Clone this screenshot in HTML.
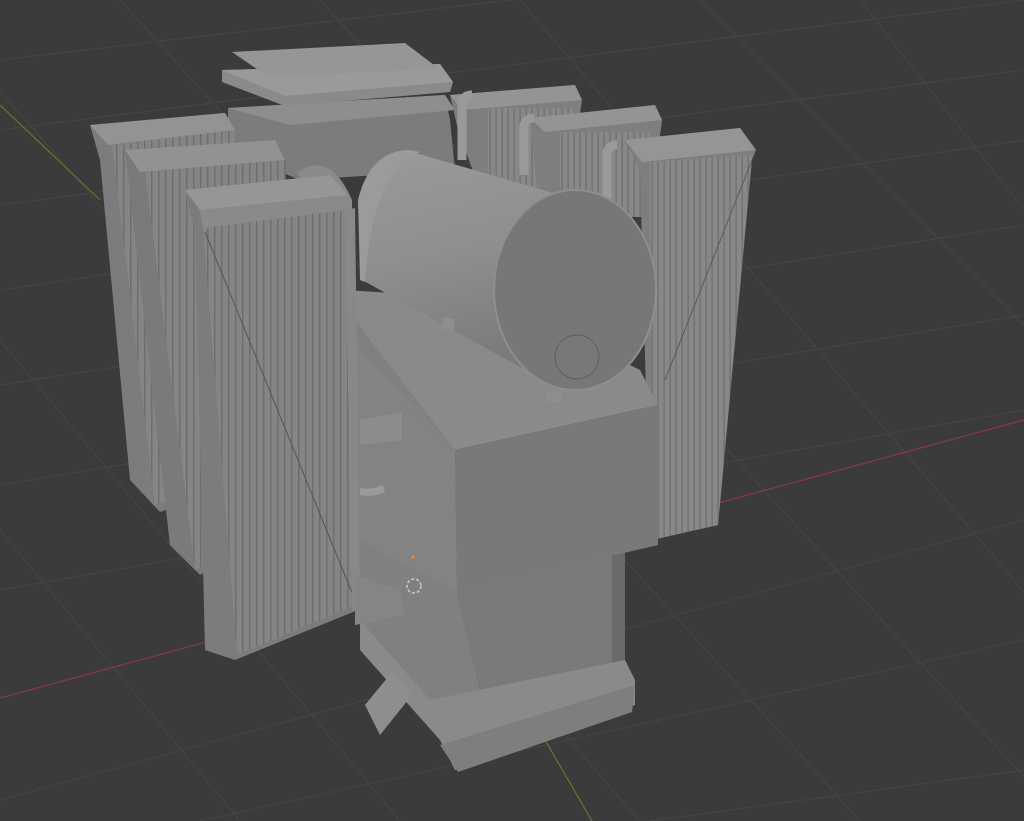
<!DOCTYPE html>
<html><head><meta charset="utf-8"><style>
html,body{margin:0;padding:0;background:#3b3b3b;overflow:hidden;width:1024px;height:821px}
svg{display:block;overflow:hidden}
</style></head><body>
<svg width="1024" height="821" viewBox="0 0 1024 821" xmlns="http://www.w3.org/2000/svg">
<defs>
<clipPath id="c"><rect width="1024" height="821"/></clipPath>
<pattern id="fins" width="7" height="10" patternUnits="userSpaceOnUse">
<rect width="7" height="10" fill="#858585"/><rect x="4" width="1.5" height="10" fill="#6e6e6e"/>
</pattern>
<pattern id="fins2" width="6" height="10" patternUnits="userSpaceOnUse">
<rect width="6" height="10" fill="#888"/><rect x="3.5" width="1.3" height="10" fill="#707070"/>
</pattern>
<linearGradient id="cyl" x1="0" y1="0" x2="0.25" y2="1">
<stop offset="0" stop-color="#9a9a9a"/><stop offset="0.5" stop-color="#8f8f8f"/><stop offset="1" stop-color="#7a7a7a"/>
</linearGradient>
</defs>
<g clip-path="url(#c)">
<rect width="1024" height="821" fill="#3b3b3b"/>
<g stroke="#464646" stroke-width="1" fill="none">
<path d="M0 60 L1024 -60 M0 130 L1024 0 M0 205 L1024 70 M0 290 L1024 140 M0 385 L1024 225 M0 485 L1024 315 M0 590 L1024 410 M0 800 L1024 520 M200 821 L1024 640 M650 821 L1024 770"/>
<path d="M-200 100 L400 821 M-80 0 L640 821 M120 0 L860 821 M320 0 L1024 777 M520 0 L1024 592 M700 0 L1024 325 M860 0 L1024 210 M0 530 L240 821"/>
</g>
<path d="M0 698 L1024 420" stroke="#8a3a3f" stroke-width="1.2"/>
<path d="M0 105 L100 200 M545 740 L592 821" stroke="#5d7a2e" stroke-width="1.2"/>

<polygon points="228,108 445,95 450,120 455,170 300,180 228,150" fill="#7c7c7c"/>
<polygon points="228,108 445,95 455,110 290,125" fill="#8e8e8e"/>
<polygon points="222,70 440,64 453,82 450,92 285,106 222,82" fill="#8a8a8a"/>
<polygon points="222,70 440,64 453,82 285,96" fill="#9a9a9a"/>
<polygon points="232,52 405,43 438,68 270,78" fill="#969696"/>

<polygon points="90,125 225,113 235,130 250,480 160,512 130,480 100,160" fill="#7c7c7c"/>
<polygon points="90,125 225,113 235,130 108,145" fill="#939393"/>
<polygon points="112,145 235,130 248,470 155,505" fill="url(#fins)"/>
<polygon points="125,150 275,140 285,160 300,520 200,575 170,545" fill="#7a7a7a"/>
<polygon points="125,150 275,140 285,160 140,172" fill="#929292"/>
<polygon points="145,172 285,160 298,520 195,570" fill="url(#fins)"/>

<polygon points="450,95 575,85 582,100 570,180 480,190 458,130" fill="#7e7e7e"/>
<polygon points="450,95 575,85 582,100 462,110" fill="#949494"/>
<rect x="488" y="108" width="85" height="80" fill="url(#fins2)"/>
<polygon points="530,118 655,105 662,120 650,215 540,220" fill="#7e7e7e"/>
<polygon points="530,118 655,105 662,120 545,132" fill="#949494"/>
<rect x="560" y="132" width="90" height="85" fill="url(#fins2)"/>
<path d="M462 160 L462 105 Q462 95 472 95" stroke="#9a9a9a" stroke-width="9" fill="none"/>
<path d="M524 175 L524 128 Q524 118 534 118" stroke="#9a9a9a" stroke-width="9" fill="none"/>
<path d="M607 215 L607 155 Q607 145 617 145" stroke="#9a9a9a" stroke-width="9" fill="none"/>

<polygon points="625,140 740,128 756,150 752,160 718,525 650,540 640,170" fill="#7e7e7e"/>
<polygon points="625,140 740,128 756,150 642,162" fill="#959595"/>
<polygon points="650,162 752,155 718,525 652,540" fill="url(#fins2)"/>
<path d="M752 160 L665 380" stroke="#5a5a5a" stroke-width="1"/>

<polygon points="345,290 500,300 640,370 658,405 455,450 355,330" fill="#8a8a8a"/>
<polygon points="355,320 455,450 457,592 490,730 455,760 360,630" fill="#808080"/>
<polygon points="457,592 615,545 615,690 490,730" fill="#7a7a7a"/>
<polygon points="612,548 625,545 625,680 612,690" fill="#6a6a6a"/>
<polygon points="360,620 430,700 625,660 635,680 635,705 455,770 440,740 360,650" fill="#8a8a8a"/>
<polygon points="440,745 635,685 632,712 458,772" fill="#7e7e7e"/>
<polygon points="365,705 392,672 412,695 380,735" fill="#8e8e8e"/>
<polygon points="455,450 658,405 658,545 457,592" fill="#797979"/>
<polygon points="355,345 455,450 457,592 360,540" fill="#838383"/>
<polygon points="360,420 402,412 402,440 360,445" fill="#8c8c8c"/>
<path d="M360 488 Q372 490 383 485 L385 492 Q370 498 360 495Z" fill="#9a9a9a"/>

<path d="M298 172 Q330 150 352 200 L352 320 L340 310 Z" fill="#8a8a8a"/>
<polygon points="405,150 612,210 540,378 362,280 358,200" fill="url(#cyl)"/>
<path d="M358 200 Q370 150 410 150 L420 152 Q372 170 365 282 L360 280Z" fill="#9b9b9b"/>
<ellipse cx="575" cy="290" rx="81" ry="100" fill="#777" stroke="#8e8e8e" stroke-width="2"/>
<circle cx="577" cy="357" r="22" fill="#787878" stroke="#5e5e5e" stroke-width="1"/>
<rect x="442" y="318" width="12" height="12" fill="#8e8e8e"/>
<rect x="547" y="392" width="14" height="10" fill="#8e8e8e"/>

<polygon points="185,190 330,175 348,195 352,220 358,610 235,660 205,650 195,230" fill="#7c7c7c"/>
<polygon points="185,190 330,175 348,195 200,210" fill="#969696"/>
<polygon points="200,210 348,195 350,210 203,228" fill="#8a8a8a"/>
<polygon points="203,228 345,210 355,605 237,655" fill="url(#fins)"/>
<path d="M205 232 L355 600" stroke="#555" stroke-width="1"/>
<polygon points="345,210 355,208 360,605 352,612" fill="#888"/>
<polygon points="355,575 400,590 405,615 355,625" fill="#858585"/>
<circle cx="414" cy="586" r="7" fill="none" stroke="#d9c9c9" stroke-width="1.5" stroke-dasharray="3 2"/>
<circle cx="413" cy="557" r="1.8" fill="#e08a2a"/>
</g>
</svg>
</body></html>
